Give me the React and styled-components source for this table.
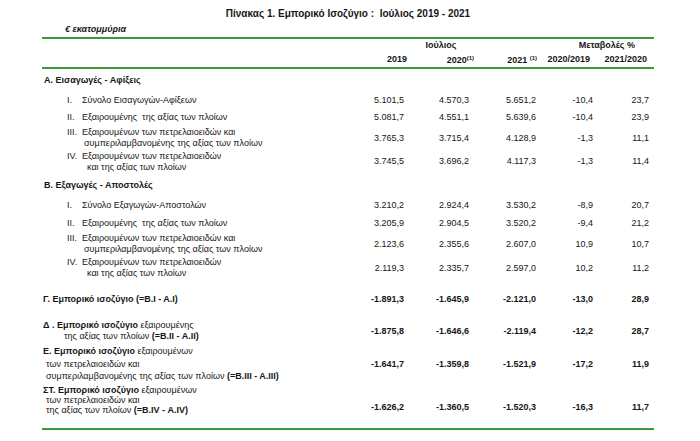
import React from 'react';
import styled, { createGlobalStyle } from 'styled-components';

const green = '#3a9a3a';
const columns = '312px 50px 65px 67px 57px 56px 5px';

const GlobalStyle = createGlobalStyle`
  html, body {
    margin: 0;
    padding: 0;
    background: #fff;
  }
  body {
    font-family: "Liberation Sans", Arial, sans-serif;
    color: #161616;
  }
`;

const Page = styled.div`
  width: 700px;
  height: 441px;
  overflow: hidden;
  background: #fff;
`;

const Sheet = styled.div`
  margin-left: 42px;
  width: 612px;
`;

const Title = styled.div`
  padding-top: 7px;
  height: 14px;
  line-height: 14px;
  text-align: center;
  font-size: 10px;
  font-weight: 700;
  white-space: pre;
`;

const Unit = styled.div`
  height: 16px;
  line-height: 16px;
  padding-left: 23px;
  font-size: 9px;
  font-weight: 700;
  font-style: italic;
`;

const Rule = styled.div`
  height: 2px;
  background: ${green};
`;

const Row = styled.div`
  display: grid;
  grid-template-columns: ${columns};
  height: ${p => p.$h}px;
  align-items: center;
  font-size: 9px;
  font-weight: ${p => (p.$bold ? 700 : 400)};
`;

const HeadCell = styled.div`
  grid-column: ${p => p.$span || 'auto'};
  text-align: ${p => p.$align || 'right'};
  padding-right: ${p => p.$pr || 0}px;
  margin-right: ${p => p.$mr || 0}px;
  white-space: nowrap;
  line-height: 11px;
`;

const Sup = styled.span`
  font-size: 6px;
  vertical-align: 3px;
`;

const Num = styled.div`
  text-align: right;
  line-height: 11px;
  align-self: ${p => (p.$end ? 'end' : 'center')};
  margin-bottom: ${p => (p.$end ? 3 : 0)}px;
  white-space: nowrap;
`;

const SectionLabel = styled.div`
  padding-left: 2px;
  font-weight: 700;
  line-height: 11px;
`;

const ItemLabel = styled.div`
  display: flex;
  padding-left: 25px;
  line-height: 11px;
`;

const Numeral = styled.span`
  flex: 0 0 15px;
`;

const Lines = styled.div`
  display: flex;
  flex-direction: column;
`;

const Line = styled.div`
  padding-left: ${p => p.$indent || 0}px;
  white-space: pre;
`;

const BalanceLabel = styled.div`
  padding-left: 1px;
  font-weight: 400;
  line-height: ${p => p.$lh || 11}px;
`;

const Strong = styled.b`
  font-weight: 700;
`;

const Spacer = styled.div`
  height: ${p => p.$h}px;
`;

const sections = [
  {
    title: 'Α. Εισαγωγές - Αφίξεις',
    h: 23,
    items: [
      { n: 'I.', h: 17, lines: ['Σύνολο Εισαγωγών-Αφίξεων'], v: ['5.101,5', '4.570,3', '5.651,2', '-10,4', '23,7'] },
      { n: 'II.', h: 17, lines: ['Εξαιρουμένης  της αξίας των πλοίων'], v: ['5.081,7', '4.551,1', '5.639,6', '-10,4', '23,9'] },
      {
        n: 'III.', h: 24, indent: 2,
        lines: ['Εξαιρουμένων των πετρελαιοειδών και', 'συμπεριλαμβανομένης της αξίας των πλοίων'],
        v: ['3.765,3', '3.715,4', '4.128,9', '-1,3', '11,1'],
      },
      {
        n: 'IV.', h: 23, indent: 5,
        lines: ['Εξαιρουμένων των πετρελαιοειδών', 'και της αξίας των πλοίων'],
        v: ['3.745,5', '3.696,2', '4.117,3', '-1,3', '11,4'],
      },
    ],
  },
  {
    title: 'Β. Εξαγωγές - Αποστολές',
    h: 24,
    items: [
      { n: 'I.', h: 17, lines: ['Σύνολο Εξαγωγών-Αποστολών'], v: ['3.210,2', '2.924,4', '3.530,2', '-8,9', '20,7'] },
      { n: 'II.', h: 18, lines: ['Εξαιρουμένης  της αξίας των πλοίων'], v: ['3.205,9', '2.904,5', '3.520,2', '-9,4', '21,2'] },
      {
        n: 'III.', h: 24, indent: 2,
        lines: ['Εξαιρουμένων των πετρελαιοειδών και', 'συμπεριλαμβανομένης της αξίας των πλοίων'],
        v: ['2.123,6', '2.355,6', '2.607,0', '10,9', '10,7'],
      },
      {
        n: 'IV.', h: 24, indent: 5,
        lines: ['Εξαιρουμένων των πετρελαιοειδών', 'και της αξίας των πλοίων'],
        v: ['2.119,3', '2.335,7', '2.597,0', '10,2', '11,2'],
      },
    ],
  },
];

const balances = [
  {
    h: 38,
    lines: [{ bold: 'Γ. Εμπορικό ισοζύγιο (=Β.Ι - Α.Ι)' }],
    v: ['-1.891,3', '-1.645,9', '-2.121,0', '-13,0', '28,9'],
  },
  {
    h: 26,
    lines: [
      { bold: 'Δ . Εμπορικό ισοζύγιο', text: ' εξαιρουμένης' },
      { indent: 21, text: 'της αξίας των πλοίων ', bold2: '(=Β.ΙΙ - Α.ΙΙ)' },
    ],
    v: ['-1.875,8', '-1.646,6', '-2.119,4', '-12,2', '28,7'],
  },
  {
    h: 40,
    lh: 12.5,
    lines: [
      { bold: 'Ε. Εμπορικό ισοζύγιο', text: ' εξαιρουμένων' },
      { indent: 3, text: 'των πετρελαιοειδών και' },
      { indent: 3, text: 'συμπεριλαμβανομένης της αξίας των πλοίων ', bold2: '(=Β.ΙΙΙ - Α.ΙΙΙ)' },
    ],
    v: ['-1.641,7', '-1.359,8', '-1.521,9', '-17,2', '11,9'],
  },
  {
    h: 32,
    lh: 10,
    end: true,
    lines: [
      { bold: 'ΣΤ. Εμπορικό ισοζύγιο', text: ' εξαιρουμένων' },
      { indent: 3, text: 'των πετρελαιοειδών και' },
      { indent: 3, text: 'της αξίας των πλοίων ', bold2: '(=Β.ΙV - Α.ΙV)' },
    ],
    v: ['-1.626,2', '-1.360,5', '-1.520,3', '-16,3', '11,7'],
  },
];

const Values = ({ v, end }) =>
  v.map((x, i) => (
    <Num key={i} $end={end}>
      {x}
    </Num>
  ));

export default function App() {
  return (
    <Page>
      <GlobalStyle />
      <Sheet>
        <Title>{'Πίνακας 1. Εμπορικό Ισοζύγιο :  Ιούλιος 2019 - 2021'}</Title>
        <Unit>€ εκατομμύρια</Unit>
        <Rule />
        <Row $h={12} $bold>
          <HeadCell $span="2 / 5" $align="center" $pr={8}>Ιούλιος</HeadCell>
          <HeadCell $span="5 / 8" $pr={19}>Μεταβολές %</HeadCell>
        </Row>
        <Row $h={16} $bold>
          <div />
          <HeadCell $mr={-3}>2019</HeadCell>
          <HeadCell $mr={-5}>2020<Sup>(1)</Sup></HeadCell>
          <HeadCell $mr={-1}>2021 <Sup>(1)</Sup></HeadCell>
          <HeadCell $mr={3}>2020/2019</HeadCell>
          <HeadCell $mr={2}>2021/2020</HeadCell>
        </Row>
        <Rule />
        {sections.map(s => (
          <React.Fragment key={s.title}>
            <Row $h={s.h}>
              <SectionLabel>{s.title}</SectionLabel>
            </Row>
            {s.items.map(it => (
              <Row key={it.n} $h={it.h}>
                <ItemLabel>
                  <Numeral>{it.n}</Numeral>
                  <Lines>
                    {it.lines.map((l, i) => (
                      <Line key={i} $indent={i ? it.indent : 0}>{l}</Line>
                    ))}
                  </Lines>
                </ItemLabel>
                <Values v={it.v} />
              </Row>
            ))}
          </React.Fragment>
        ))}
        {balances.map((b, k) => (
          <Row key={k} $h={b.h} $bold>
            <BalanceLabel $lh={b.lh}>
              {b.lines.map((l, i) => (
                <Line key={i} $indent={l.indent}>
                  {l.bold && <Strong>{l.bold}</Strong>}
                  {l.text}
                  {l.bold2 && <Strong>{l.bold2}</Strong>}
                </Line>
              ))}
            </BalanceLabel>
            <Values v={b.v} end={b.end} />
          </Row>
        ))}
        <Spacer $h={12} />
        <Rule />
      </Sheet>
    </Page>
  );
}
